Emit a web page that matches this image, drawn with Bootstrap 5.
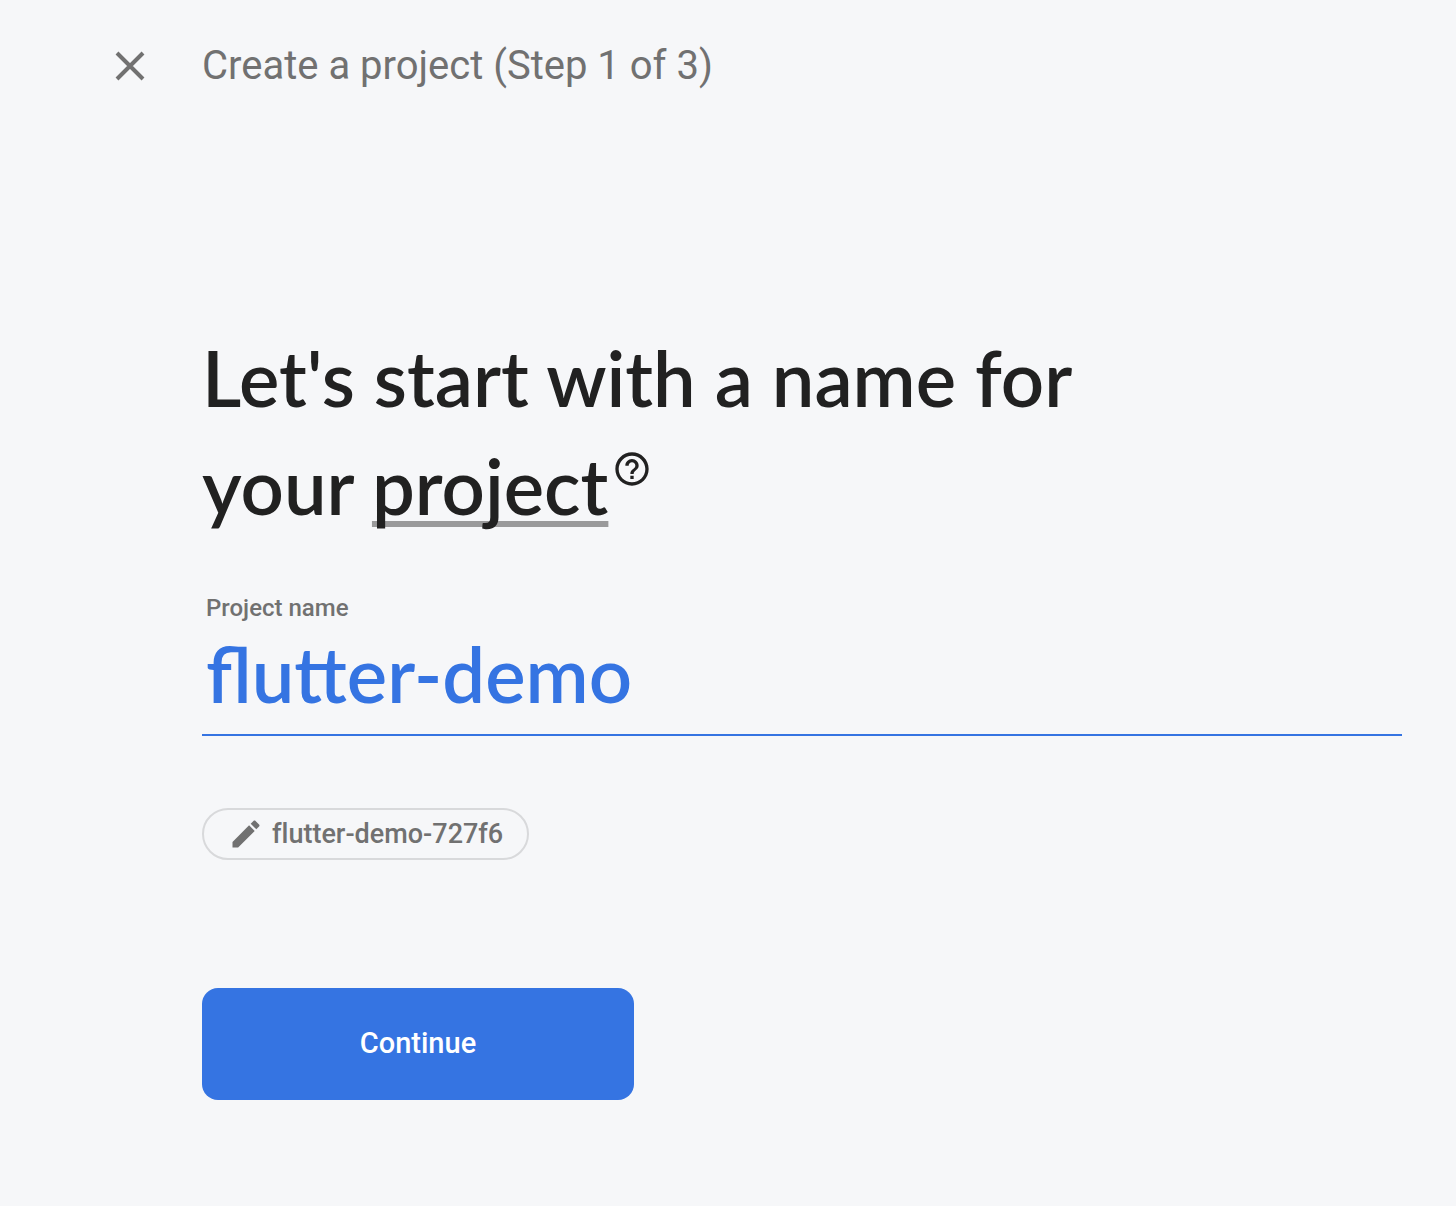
<!DOCTYPE html>
<html lang="en">
<head>
<meta charset="utf-8">
<meta name="viewport" content="width=device-width, initial-scale=1">
<title>Create a project</title>
<link href="https://cdn.jsdelivr.net/npm/bootstrap@5.3.0/dist/css/bootstrap.min.css" rel="stylesheet">
<style>
body { background: #f6f7f9; font-family: Roboto, sans-serif; color: #717171; }
.wizard-head { padding: 36px 54px 0 106px; gap: 48px; }
.close-btn { width: 48px; height: 48px; color: #717171; }
.step-title { font-size: 40px; line-height: 60px; font-weight: 400; }
.wizard-body { padding: 228px 54px 106px 202px; }
.headline { font-family: Lato, sans-serif; font-size: 76px; line-height: 108px; font-weight: 600; color: #212121; max-width: 960px; }
.term { text-decoration: underline; text-decoration-color: #9a9a9b; text-decoration-thickness: 6px; text-underline-offset: 6px; text-decoration-skip-ink: none; }
.help-btn { width: 40px; height: 40px; color: #212121; vertical-align: 26px; margin-left: 4px; }
.name-label { font-size: 24px; line-height: 32px; font-weight: 500; padding-left: 4px; margin-top: 52px; }
.name-input, .name-input:focus { font-family: Lato, sans-serif; font-size: 76px; line-height: 96px; height: 112px; font-weight: 600; color: #3574e2; background: transparent; border-bottom: 2px solid #3574e2; padding: 0 4px 12px; box-shadow: none; }
.id-chip { height: 52px; margin-top: 72px; padding: 0 24px; gap: 8px; border: 2px solid #d8d9db; border-radius: 26px; font-size: 27px; line-height: 32px; font-weight: 500; font-variant-ligatures: none; color: #717171; }
.continue-btn { width: 432px; height: 112px; margin-top: 128px; border-radius: 16px; font-size: 29px; font-weight: 500; color: #fff; background: #3574e2; }
.continue-btn:hover { color: #fff; background: #2b66cd; }
</style>
</head>
<body>
<header class="wizard-head d-flex align-items-center">
  <button type="button" class="close-btn btn border-0 p-0 d-flex" aria-label="Close">
    <svg width="48" height="48" viewBox="0 0 48 48" fill="none" stroke="currentColor" stroke-width="4" aria-hidden="true"><path d="M11 11 37 37M37 11 11 37"/></svg>
  </button>
  <div class="step-title">Create a project (Step 1 of 3)</div>
</header>
<main class="wizard-body">
  <form>
    <h1 class="headline mb-0">Let's start with a name for your <span class="text-nowrap"><span class="term">project</span><button type="button" class="help-btn btn border-0 p-0 d-inline-flex" aria-label="What is a project?"><svg width="40" height="40" viewBox="0 0 24 24" fill="currentColor" aria-hidden="true"><path d="M11 18h2v-2h-2v2zm1-16C6.480 2 2 6.480 2 12s4.480 10 10 10 10-4.480 10-10S17.520 2 12 2zm0 18c-4.410 0-8-3.590-8-8s3.590-8 8-8 8 3.590 8 8-3.590 8-8 8zm0-14c-2.210 0-4 1.790-4 4h2c0-1.100.9-2 2-2s2 .9 2 2c0 2-3 1.750-3 5h2c0-2.250 3-2.500 3-5 0-2.210-1.790-4-4-4z"/></svg></button></span></h1>
    <label for="projectName" class="name-label d-block">Project name</label>
    <input id="projectName" type="text" class="name-input form-control border-top-0 border-start-0 border-end-0 rounded-0" value="flutter-demo" spellcheck="false" autocomplete="off">
    <button type="button" class="id-chip btn d-flex align-items-center">
      <svg width="36" height="36" viewBox="0 0 24 24" fill="currentColor" aria-hidden="true"><path d="M3 17.250V21h3.750L17.810 9.940l-3.750-3.750L3 17.250zM20.710 7.040c.39-.39.39-1.020 0-1.410l-2.340-2.340c-.39-.39-1.020-.39-1.410 0l-1.830 1.830 3.750 3.750 1.830-1.830z"/></svg>
      <span>flutter-demo-727f6</span>
    </button>
    <button type="submit" class="continue-btn btn border-0 d-block">Continue</button>
  </form>
</main>
<script src="https://cdn.jsdelivr.net/npm/bootstrap@5.3.0/dist/js/bootstrap.bundle.min.js"></script>
</body>
</html>
